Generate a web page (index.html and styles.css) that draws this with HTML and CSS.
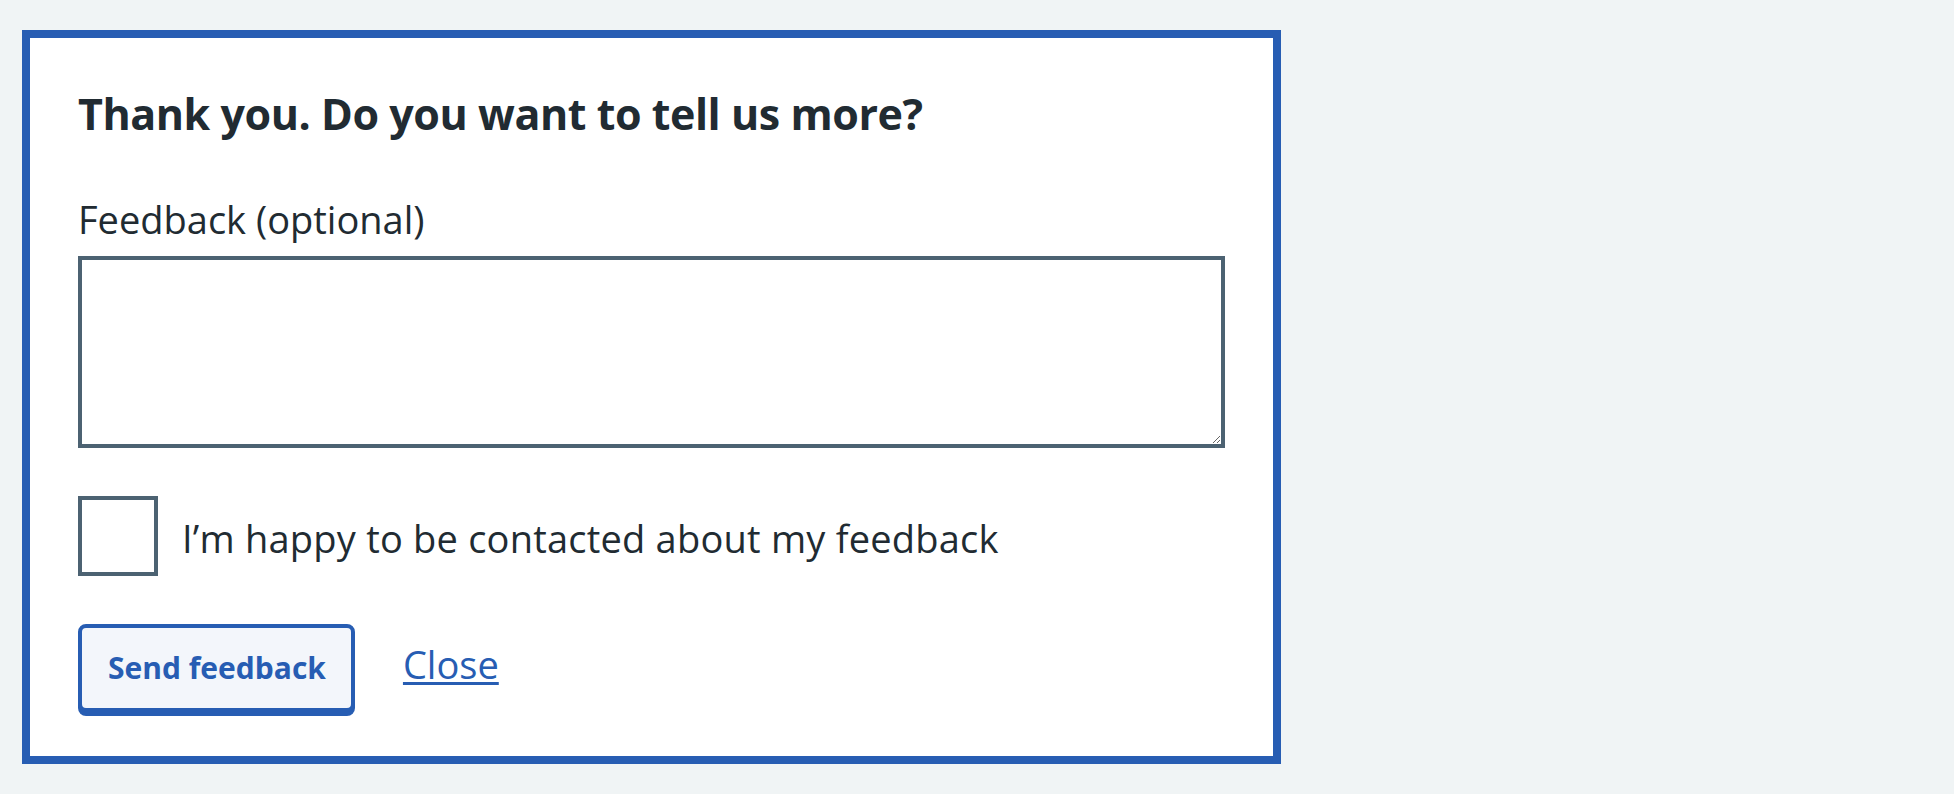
FILE: index.html
```html
<!DOCTYPE html>
<html lang="en">
<head>
<meta charset="utf-8">
<title>Feedback</title>
<link rel="stylesheet" href="styles.css">
</head>
<body>
<form class="panel">
  <h2 class="panel-title">Thank you. Do you want to tell us more?</h2>
  <label class="field-label" for="fb">Feedback (optional)</label>
  <textarea class="field-textarea" id="fb"></textarea>
  <div class="check-row">
    <input class="check-input" type="checkbox" id="contact">
    <label class="check-label" for="contact">I’m happy to be contacted about my feedback</label>
  </div>
  <div class="actions">
    <button class="btn-secondary" type="button">Send feedback</button>
    <a class="close-link" href="#">Close</a>
  </div>
</form>
</body>
</html>
```
FILE: styles.css
```css
html, body {
  margin: 0;
  padding: 0;
}
body {
  background: #f0f4f5;
  font-family: "Open Sans", "Noto Sans", sans-serif;
  color: #212b32;
  height: 794px;
  overflow: hidden;
}
.panel {
  box-sizing: border-box;
  width: 1259px;
  margin: 30px 0 0 22px;
  border: 8px solid #275db3;
  background: #ffffff;
  padding: 48px 48px 44px;
  display: flex;
  flex-direction: column;
}
.panel-title {
  margin: 0;
  font-size: 43px;
  line-height: 56px;
  font-weight: 700;
  letter-spacing: -0.45px;
}
.field-label {
  display: block;
  margin: 51px 0 11px;
  font-size: 38px;
  line-height: 52px;
}
.field-textarea {
  display: block;
  box-sizing: border-box;
  width: 100%;
  height: 192px;
  margin: 0;
  border: 4px solid #4c6272;
  border-radius: 0;
  background: #fff;
  font-family: inherit;
  font-size: 38px;
  outline: none;
}
.check-row {
  margin-top: 48px;
  display: flex;
  align-items: center;
  gap: 24px;
}
.check-input {
  appearance: none;
  -webkit-appearance: none;
  box-sizing: border-box;
  width: 80px;
  height: 80px;
  margin: 0;
  border: 4px solid #4c6272;
  background: #fff;
  flex: none;
}
.check-label {
  font-size: 38px;
  line-height: 52px;
  padding-top: 4px;
  letter-spacing: 0.22px;
}
.actions {
  margin-top: 48px;
  display: flex;
  align-items: baseline;
  gap: 48px;
}
.btn-secondary {
  box-sizing: border-box;
  height: 88px;
  padding: 0 25px 0 26px;
  border: 4px solid #275db3;
  border-radius: 8px;
  background: #f3f6fb;
  box-shadow: 0 4px 0 #275db3;
  color: #275db3;
  font-family: inherit;
  font-size: 30px;
  font-weight: 700;
  line-height: 40px;
  cursor: pointer;
}
.close-link {
  color: #275db3;
  font-size: 38px;
  line-height: 52px;
  text-decoration: underline;
  text-decoration-thickness: 3px;
  text-underline-offset: 3px;
}
```
